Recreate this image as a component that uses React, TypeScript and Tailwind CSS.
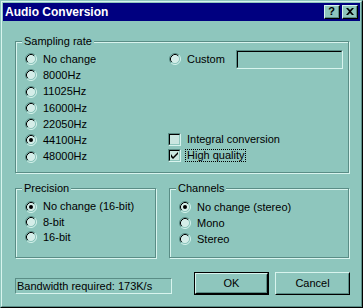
import type { ReactNode } from "react";

const FONT = { fontFamily: '"Liberation Sans", Arial, sans-serif' };

function Radio({ checked = false }: { checked?: boolean }) {
  return (
    <svg width="12" height="12" viewBox="0 0 12 12" className="shrink-0">
      <circle cx="6" cy="6" r="4.5" fill="#d4ede8" />
      <path d="M2.11 9.89 A5.5 5.5 0 0 1 9.89 2.11" fill="none" stroke="#5a8d86" strokeWidth="1" />
      <path d="M2.82 9.18 A4.5 4.5 0 0 1 9.18 2.82" fill="none" stroke="#000" strokeWidth="1" />
      <path d="M9.89 2.11 A5.5 5.5 0 0 1 2.11 9.89" fill="none" stroke="#d8f4ee" strokeWidth="1" />
      <path d="M9.18 2.82 A4.5 4.5 0 0 1 2.82 9.18" fill="none" stroke="#8ec6bd" strokeWidth="1" />
      {checked ? <circle cx="6" cy="6" r="2" fill="#000" /> : null}
    </svg>
  );
}

function Check({ checked = false }: { checked?: boolean }) {
  return (
    <div className="w-[13px] h-[13px] shrink-0 border border-t-[#5a8d86] border-l-[#5a8d86] border-r-[#d8f4ee] border-b-[#d8f4ee]">
      <div className="w-full h-full border border-t-black border-l-black border-r-[#8ec6bd] border-b-[#8ec6bd] bg-[#c9e6e0]">
        {checked ? (
          <svg width="9" height="9" viewBox="0 0 9 9">
            <path d="M1 3v3l2 2 5-5V1L3 6z" fill="#000" />
          </svg>
        ) : null}
      </div>
    </div>
  );
}

function RadioRow({ label, checked, h = "h-[16.25px]" }: { label: string; checked?: boolean; h?: string }) {
  return (
    <div className={`flex items-center gap-[6px] ${h}`}>
      <Radio checked={checked} />
      <span>{label}</span>
    </div>
  );
}

function Group({ title, className, children }: { title: string; className: string; children: ReactNode }) {
  return (
    <div
      className={`relative border border-[#5a8d86] shadow-[inset_1px_1px_0_#d8f4ee,1px_1px_0_#d8f4ee] ${className}`}
    >
      <span className="absolute -top-[8px] left-[6px] bg-[#8ec6bd] px-[2px] leading-[14px]">{title}</span>
      {children}
    </div>
  );
}

function Button({ label, isDefault = false }: { label: string; isDefault?: boolean }) {
  return (
    <div className={`w-[75px] h-[23px] ${isDefault ? "border border-black" : ""}`}>
      <div className="w-full h-full border border-t-[#d8f4ee] border-l-[#d8f4ee] border-r-black border-b-black">
        <div className="w-full h-full flex items-center justify-center border border-t-[#8ec6bd] border-l-[#8ec6bd] border-r-[#5a8d86] border-b-[#5a8d86]">
          {label}
        </div>
      </div>
    </div>
  );
}

function TitleButton({ children }: { children: ReactNode }) {
  return (
    <div className="w-[16px] h-[14px] bg-[#8ec6bd] border border-t-[#d8f4ee] border-l-[#d8f4ee] border-r-black border-b-black">
      <div className="w-full h-full flex items-center justify-center border-r border-b border-[#5a8d86] text-black font-bold text-[11px] leading-none">
        {children}
      </div>
    </div>
  );
}

export default function App() {
  return (
    <div className="w-[363px] h-[308px] text-[11px] text-black" style={FONT}>
      <div className="w-full h-full border border-t-[#8ec6bd] border-l-[#8ec6bd] border-r-black border-b-black bg-[#8ec6bd]">
        <div className="w-full h-full border border-t-[#d8f4ee] border-l-[#d8f4ee] border-r-[#5a8d86] border-b-[#5a8d86] p-[1px] flex flex-col">
          <div className="h-[18px] bg-[#000080] flex items-center justify-between pl-[2px] pr-[2px]">
            <span className="text-white font-bold text-[12px]">Audio Conversion</span>
            <div className="flex gap-[2px]">
              <TitleButton>?</TitleButton>
              <TitleButton>
                <svg width="8" height="7" viewBox="0 0 8 7">
                  <path d="M0 0h2l2 2 2-2h2L5 3.5 8 7H6L4 5 2 7H0l3-3.5z" fill="#000" />
                </svg>
              </TitleButton>
            </div>
          </div>

          <div className="pl-[12px] pt-[20px] w-[348px]">
            <Group title="Sampling rate" className="w-[334px] h-[132px] pt-[9px] pl-[9px] flex">
              <div className="w-[143px] flex flex-col">
                <RadioRow label="No change" />
                <RadioRow label="8000Hz" />
                <RadioRow label="11025Hz" />
                <RadioRow label="16000Hz" />
                <RadioRow label="22050Hz" />
                <RadioRow label="44100Hz" checked />
                <RadioRow label="48000Hz" />
              </div>
              <div className="flex-1 flex flex-col pb-[8px]">
                <div className="flex items-center h-[16.25px] pl-[1px]">
                  <Radio />
                  <span className="ml-[6px]">Custom</span>
                  <div className="ml-[11px] w-[107px] h-[19px] shrink-0 border border-t-[#5a8d86] border-l-[#5a8d86] border-r-[#d8f4ee] border-b-[#d8f4ee]">
                    <div className="w-full h-full border border-t-black border-l-black border-r-[#8ec6bd] border-b-[#8ec6bd]" />
                  </div>
                </div>
                <div className="flex-1" />
                <div className="flex items-center gap-[6px] h-[16.25px]">
                  <Check />
                  <span>Integral conversion</span>
                </div>
                <div className="flex items-center gap-[5px] h-[16.25px]">
                  <Check checked />
                  <span className="outline outline-1 outline-dotted outline-black px-[1px] leading-[11px]">High quality</span>
                </div>
              </div>
            </Group>

            <div className="flex gap-[13px] mt-[15px]">
              <Group title="Precision" className="w-[141px] h-[70px] pt-[10px] pl-[9px]">
                <RadioRow label="No change (16-bit)" checked h="h-[15.3px]" />
                <RadioRow label="8-bit" h="h-[15.3px]" />
                <RadioRow label="16-bit" h="h-[15.3px]" />
              </Group>
              <Group title="Channels" className="w-[180px] h-[70px] pt-[10px] pl-[9px]">
                <RadioRow label="No change (stereo)" checked h="h-[16px]" />
                <RadioRow label="Mono" h="h-[16px]" />
                <RadioRow label="Stereo" h="h-[16px]" />
              </Group>
            </div>

            <div className="flex items-end mt-[14px]">
              <div className="w-[157px] h-[16px] mb-[1px] border border-t-[#5a8d86] border-l-[#5a8d86] border-r-[#d8f4ee] border-b-[#d8f4ee] flex items-center pl-[1px]">
                Bandwidth required: 173K/s
              </div>
              <div className="ml-[22px] flex gap-[6px]">
                <Button label="OK" isDefault />
                <Button label="Cancel" />
              </div>
            </div>
          </div>
        </div>
      </div>
    </div>
  );
}
